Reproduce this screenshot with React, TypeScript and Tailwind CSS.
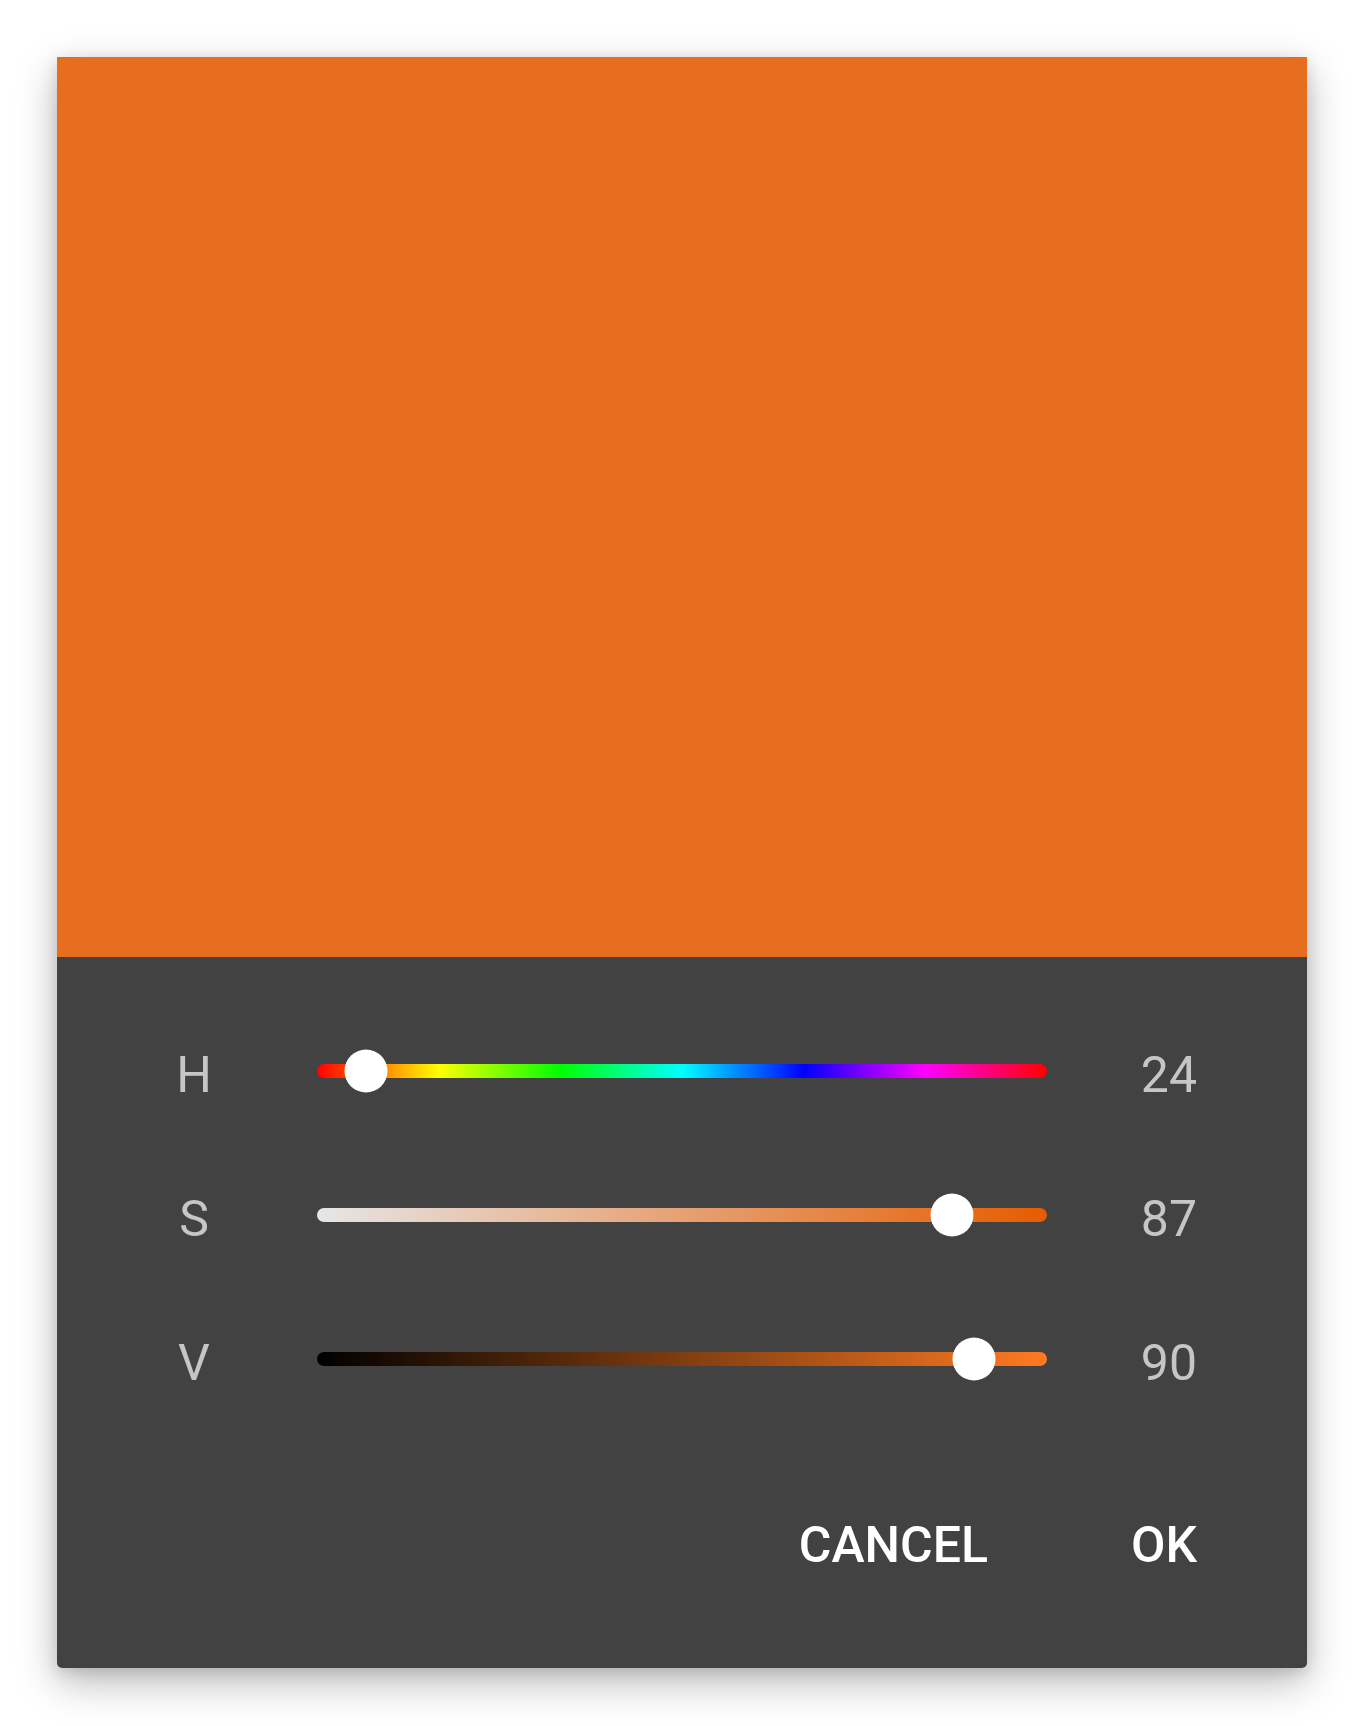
import React, { useState } from 'react';

type Channel = {
  key: 'h' | 's' | 'v';
  label: string;
  max: number;
};

const channels: Channel[] = [
  { key: 'h', label: 'H', max: 360 },
  { key: 's', label: 'S', max: 100 },
  { key: 'v', label: 'V', max: 100 },
];

// HSV -> "rgb(r,g,b)"
const hsvToRgb = (h: number, s: number, v: number) => {
  const c = v * s;
  const x = c * (1 - Math.abs(((h / 60) % 2) - 1));
  const m = v - c;
  let r = 0, g = 0, b = 0;
  if (h < 60) [r, g, b] = [c, x, 0];
  else if (h < 120) [r, g, b] = [x, c, 0];
  else if (h < 180) [r, g, b] = [0, c, x];
  else if (h < 240) [r, g, b] = [0, x, c];
  else if (h < 300) [r, g, b] = [x, 0, c];
  else [r, g, b] = [c, 0, x];
  return `rgb(${Math.round((r + m) * 255)}, ${Math.round((g + m) * 255)}, ${Math.round((b + m) * 255)})`;
};

const Slider: React.FC<{ value: number; max: number; background: string }> = ({ value, max, background }) => {
  const pct = (value / max) * 100;
  return (
    <div className="relative w-[730px] h-[14px] rounded-full" style={{ background }}>
      <div
        className="absolute top-1/2 w-[43px] h-[43px] -translate-x-1/2 -translate-y-1/2 rounded-full bg-white"
        style={{ left: `${pct}%` }}
      />
    </div>
  );
};

export default function App() {
  const [hsv] = useState({ h: 24, s: 87, v: 90 });

  const color = hsvToRgb(hsv.h, hsv.s / 100, hsv.v / 100);

  // Hintergründe der Regler
  const backgrounds: Record<Channel['key'], string> = {
    h: 'linear-gradient(to right, #ff0000, #ffff00 16.7%, #00ff00 33.3%, #00ffff 50%, #0000ff 66.7%, #ff00ff 83.3%, #ff0000)',
    s: `linear-gradient(to right, ${hsvToRgb(hsv.h, 0, hsv.v / 100)}, ${hsvToRgb(hsv.h, 1, hsv.v / 100)})`,
    v: `linear-gradient(to right, #000000, ${hsvToRgb(hsv.h, hsv.s / 100, 1)})`,
  };

  return (
    <div className="min-h-[1726px] bg-white pt-[57px] flex justify-center" style={{ fontFamily: 'Roboto, "Noto Sans", sans-serif' }}>
      <div className="w-[1250px] h-[1611px] flex flex-col rounded-b-[5px] overflow-hidden shadow-[0_14px_40px_rgba(0,0,0,0.28),0_4px_14px_rgba(0,0,0,0.12)]">
        {/* Farbvorschau */}
        <div className="h-[900px] shrink-0" style={{ backgroundColor: color }} />

        {/* Regler */}
        <div className="flex-1 bg-[#424242] flex flex-col pt-[42px]">
          {channels.map(ch => (
            <div key={ch.key} className="h-[144px] flex items-center pl-[101px]">
              <div className="w-[72px] text-center text-[50px] leading-none text-[#c6c6c6] translate-y-[4px]">{ch.label}</div>
              <div className="ml-[87px]">
                <Slider value={hsv[ch.key]} max={ch.max} background={backgrounds[ch.key]} />
              </div>
              <div className="w-[150px] text-right text-[50px] leading-none text-[#c6c6c6] translate-y-[4px]">{hsv[ch.key]}</div>
            </div>
          ))}

          <div className="flex justify-end items-center gap-[143px] mt-[78px] pr-[110px]">
            <button className="h-[72px] text-[50px] font-medium text-white leading-none">CANCEL</button>
            <button className="h-[72px] text-[50px] font-medium text-white leading-none">OK</button>
          </div>
        </div>
      </div>
    </div>
  );
}
